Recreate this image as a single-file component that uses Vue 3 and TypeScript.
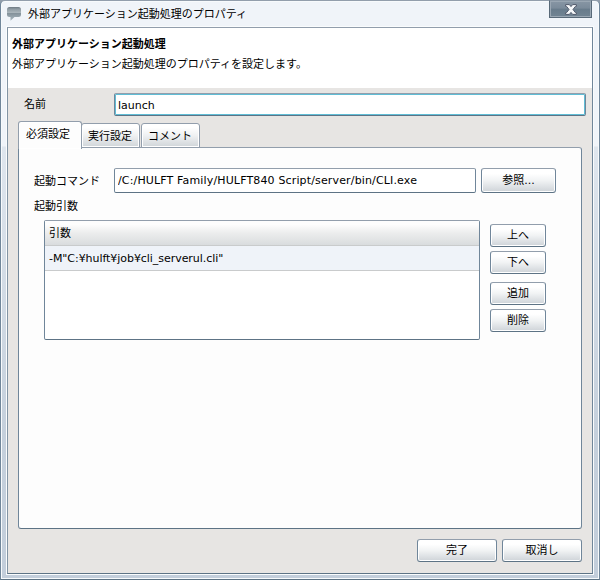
<script setup lang="ts">
import { ref } from 'vue'

const name = ref('launch')
const command = ref('/C:/HULFT Family/HULFT840 Script/server/bin/CLI.exe')
const tabs = ['必須設定', '実行設定', 'コメント']
const active = ref(0)
const args = ref(['-M"C:¥hulft¥job¥cli_serverul.cli"'])
</script>

<template>
  <div class="window">
    <header class="titlebar">
      <svg class="bubble" width="16" height="16" viewBox="0 0 16 16">
        <defs>
          <linearGradient id="bubbleFill" x1="0" y1="0" x2="0" y2="1">
            <stop offset="0" stop-color="#6d7982" />
            <stop offset=".15" stop-color="#8f9ba3" />
            <stop offset=".4" stop-color="#a9b4ba" />
            <stop offset=".45" stop-color="#83919a" />
            <stop offset="1" stop-color="#a9b8c0" />
          </linearGradient>
        </defs>
        <path d="M2.5 0H11.5Q14 0 14 2.5V7.5Q14 10 11.5 10H7.5L3.5 13.8V10H2.5Q0 10 0 7.5V2.5Q0 0 2.5 0Z" fill="url(#bubbleFill)" />
      </svg>
      <h1 class="title">外部アプリケーション起動処理のプロパティ</h1>
      <button class="close" aria-label="閉じる">
        <svg width="12" height="11" viewBox="0 0 12 11">
          <path d="M.6 .6H4.4L6 2.6L7.6 .6H11.4V2.4H10.4L8 5.5L10.4 8.6H11.4V10.4H7.6L6 8.4L4.4 10.4H.6V8.6H1.6L4 5.5L1.6 2.4H.6Z" fill="#f6f8fa" stroke="#50596b" stroke-width="1" />
        </svg>
      </button>
    </header>

    <main class="body">
      <section class="intro">
        <h2>外部アプリケーション起動処理</h2>
        <p>外部アプリケーション起動処理のプロパティを設定します。</p>
      </section>

      <div class="name-row">
        <label for="name">名前</label>
        <input id="name" v-model="name" class="field focused" type="text" />
      </div>

      <nav class="tabs">
        <button v-for="(tab, i) in tabs" :key="tab" class="tab" :class="{ active: i === active }" @click="active = i">{{ tab }}</button>
      </nav>

      <section class="panel">
        <div class="command-row">
          <label for="command">起動コマンド</label>
          <input id="command" v-model="command" class="field" type="text" />
          <button class="btn browse">参照...</button>
        </div>
        <div class="args-label">起動引数</div>
        <div class="args-row">
          <div class="table">
            <div class="head">引数</div>
            <div v-for="arg in args" :key="arg" class="row">{{ arg }}</div>
          </div>
          <div class="side">
            <button class="btn">上へ</button>
            <button class="btn">下へ</button>
            <button class="btn add">追加</button>
            <button class="btn">削除</button>
          </div>
        </div>
      </section>

      <footer class="actions">
        <button class="btn">完了</button>
        <button class="btn">取消し</button>
      </footer>
    </main>
  </div>
</template>

<style>
body {
  margin: 0;
  background: #929eac;
}
</style>

<style scoped>
.window,
.window * {
  box-sizing: border-box;
}
.window {
  width: 600px;
  height: 580px;
  padding: 2px 6px 6px;
  border: 1px solid;
  border-color: #929eac #70869a #5d7385 #70869a;
  border-radius: 5px 5px 0 0;
  box-shadow: inset 0 0 0 1px #f7fafc;
  background: linear-gradient(#f0f4f9 0, #f0f4f9 145px, #dfe6ee 146px, #c5d0dc 430px, #c3cedb);
  font-family: "DejaVu Sans", "Noto Sans CJK JP", sans-serif;
  font-size: 11px;
  color: #000;
}
button,
input {
  font: inherit;
  color: inherit;
  margin: 0;
}
.titlebar {
  display: flex;
  height: 24px;
}
.bubble {
  margin: 4px 5px 0 0;
}
.title {
  flex: 1;
  margin: 0;
  font-size: 11px;
  font-weight: 400;
  line-height: 24px;
}
.close {
  display: flex;
  align-items: center;
  justify-content: center;
  width: 43px;
  height: 18px;
  margin: -3px 1px 0 0;
  padding: 1px 0 0;
  border: 1px solid #586978;
  border-top-color: #8795a3;
  box-shadow: inset 0 0 0 1px #9aa7b3;
  background: linear-gradient(#8796a4 0, #7b8b9a 45%, #687b8b 50%, #718493 100%);
}
.body {
  height: 547px;
  border: 1px solid;
  border-color: #929eac #70869a #5d7385 #8294a4;
  box-shadow: 0 0 0 1px #fafcfd;
  background: #e7e5e3;
}
.intro {
  height: 60px;
  padding: 7px 4px 0;
  background: #fff;
}
.intro h2,
.intro p {
  margin: 0;
  font-size: 11px;
  line-height: 20px;
}
.name-row {
  display: flex;
  height: 33px;
  padding: 5px 6px 0 16px;
}
.name-row label {
  width: 90px;
  line-height: 24px;
}
.field {
  height: 25px;
  padding: 0 3px;
  border: 1px solid;
  border-color: #929eac #70869a #5d7385;
  border-radius: 2px;
  outline: 0;
  background: #fff;
}
.field.focused {
  flex: 1;
  height: 23px;
  padding-top: 1px;
  box-shadow: inset 0 0 0 1px #60bdd5;
}
.tabs {
  display: flex;
  align-items: flex-end;
  gap: 1px;
  height: 27px;
  padding-left: 10px;
}
.tab {
  height: 25px;
  padding: 0 1px 2px 0;
  width: 59px;
  border: 1px solid #929eac;
  border-radius: 3px 3px 0 0;
  box-shadow: inset 0 0 0 1px #fff;
  background: linear-gradient(#fff 15%, #eff1f2 50%, #d0d5d9);
  white-space: nowrap;
}
.tab.active {
  z-index: 1;
  width: 64px;
  height: 28px;
  margin: 0 -2px -1px 0;
  padding: 0 4px 6px 0;
  border-bottom: 0;
  background: #fdfdfd;
}
.panel {
  width: 564px;
  height: 382px;
  margin: -1px 0 0 10px;
  padding: 20px 15px 0;
  border: 1px solid;
  border-color: #929eac #70869a #5d7385;
  border-radius: 0 3px 3px 3px;
  background: #fdfdfd;
}
.command-row {
  display: flex;
  align-items: center;
  height: 25px;
}
.command-row label {
  width: 80px;
  padding-bottom: 1px;
}
.command-row .field {
  width: 362px;
  letter-spacing: .15px;
}
.btn {
  padding: 0 0 4px;
  border: 1px solid;
  border-color: #929eac #70869a #5d7385;
  border-radius: 3px;
  box-shadow: inset 0 0 0 1px #fff;
  background: linear-gradient(#fff 20%, #f1f3f4 50%, #ced3d8);
}
.browse {
  width: 75px;
  height: 25px;
  margin-left: 5px;
}
.args-label {
  height: 27px;
  line-height: 28px;
}
.args-row {
  display: flex;
  gap: 10px;
  padding-left: 10px;
}
.table {
  width: 436px;
  height: 120px;
  border: 1px solid;
  border-color: #929eac #70869a #5d7385;
  border-radius: 2px;
  background: #fff;
}
.head,
.row {
  height: 25px;
  padding-left: 4px;
  border-bottom: 1px solid #c9cbcc;
  line-height: 26px;
}
.head {
  background: linear-gradient(#fdfdfd 15%, #eceded 50%, #d9dcde);
}
.row {
  background: #eff3f9;
  letter-spacing: -.05px;
}
.side {
  display: flex;
  flex-direction: column;
  gap: 4px;
  width: 56px;
  padding-top: 4px;
}
.side .btn {
  height: 23px;
}
.side .add {
  margin-top: 4px;
}
.actions {
  display: flex;
  gap: 5px;
  justify-content: flex-end;
  padding: 10px 10px 0 0;
}
.actions .btn {
  width: 80px;
  height: 23px;
}
</style>
